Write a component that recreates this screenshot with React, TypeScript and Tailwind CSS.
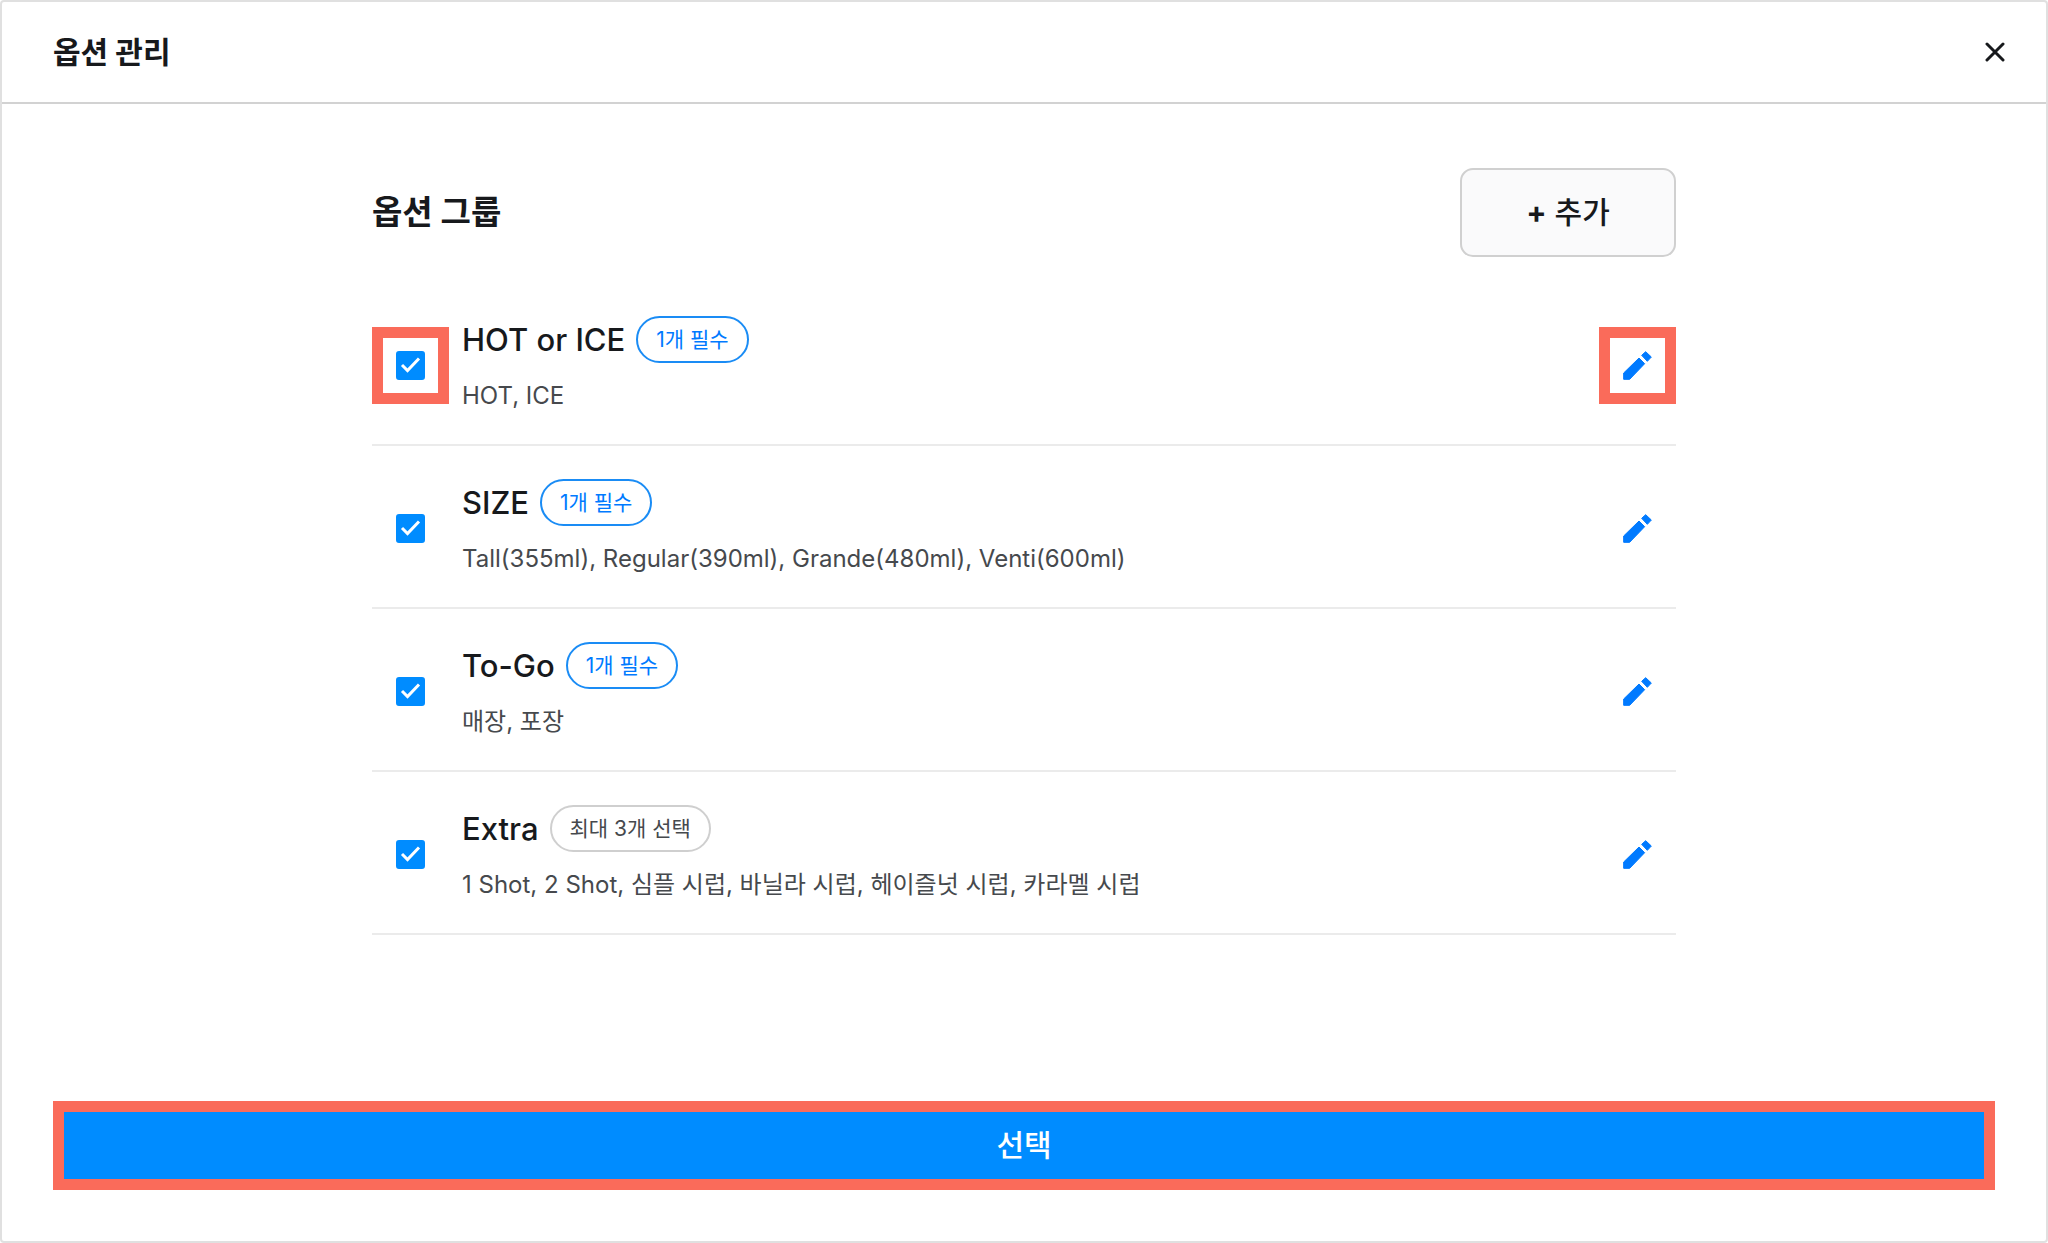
import { useState } from 'react'
import clsx from 'clsx'

type OptionGroup = {
  id: string
  name: string
  rule: string
  required: boolean
  items: string
  highlighted?: boolean
}

const groups: OptionGroup[] = [
  { id: 'temp', name: 'HOT or ICE', rule: '1개 필수', required: true, items: 'HOT, ICE', highlighted: true },
  {
    id: 'size',
    name: 'SIZE',
    rule: '1개 필수',
    required: true,
    items: 'Tall(355ml), Regular(390ml), Grande(480ml), Venti(600ml)',
  },
  { id: 'togo', name: 'To-Go', rule: '1개 필수', required: true, items: '매장, 포장' },
  {
    id: 'extra',
    name: 'Extra',
    rule: '최대 3개 선택',
    required: false,
    items: '1 Shot, 2 Shot, 심플 시럽, 바닐라 시럽, 헤이즐넛 시럽, 카라멜 시럽',
  },
]

function CloseIcon() {
  return (
    <svg viewBox="0 0 20 20" className="size-5" fill="none" stroke="currentColor" strokeWidth="3" strokeLinecap="round">
      <path d="M2 2l16 16M18 2L2 18" />
    </svg>
  )
}

function PencilIcon() {
  return (
    <svg viewBox="0 0 87 87" className="size-[29px]" fill="currentColor" stroke="currentColor" strokeWidth="3" strokeLinejoin="round">
      <path d="M68 2L85 18L73 31L56 13Z" />
      <path d="M48 21L65 38L20 85H2V66Z" />
    </svg>
  )
}

function OptionRow({ group }: { group: OptionGroup }) {
  const [checked, setChecked] = useState(true)
  const frame = group.highlighted ? 'border-[#fa6b5a]' : 'border-transparent'

  return (
    <li className="flex items-center gap-[13px] border-b-2 border-[#ebebeb] pt-[33px] pb-[30px]">
      <div className={clsx('grid size-[77px] shrink-0 place-items-center border-[11px]', frame)}>
        <input
          id={group.id}
          type="checkbox"
          checked={checked}
          onChange={(event) => setChecked(event.target.checked)}
          className="peer col-start-1 row-start-1 size-[29px] appearance-none rounded-[3px] border-2 border-[#c8c8c8] checked:border-[#008cff] checked:bg-[#008cff]"
        />
        <svg
          viewBox="0 0 29 29"
          className="pointer-events-none invisible col-start-1 row-start-1 size-[29px] peer-checked:visible"
          fill="none"
          stroke="white"
          strokeWidth="3"
        >
          <path d="M6 14l5.500 5.500L23 7.500" />
        </svg>
      </div>
      <div className="min-w-0 flex-1">
        <div className="flex items-center gap-[11px]">
          <label htmlFor={group.id} className="text-[31px] leading-[47px] font-medium">
            {group.name}
          </label>
          <span
            className={clsx(
              'rounded-full border-2 px-[18px] text-[21px] leading-[43px]',
              group.required ? 'border-[#1a8cf5] text-[#007aff]' : 'border-[#cfcfcf] text-[#46494d]',
            )}
          >
            {group.rule}
          </span>
        </div>
        <p className="mt-[15px] text-[24px] leading-[36px] text-[#46494d]">{group.items}</p>
      </div>
      <button
        type="button"
        aria-label={`${group.name} 수정`}
        className={clsx('grid size-[77px] shrink-0 place-items-center border-[11px] text-[#007aff]', frame)}
      >
        <PencilIcon />
      </button>
    </li>
  )
}

export default function App() {
  return (
    <div className="flex min-h-screen flex-col rounded-[4px] border-2 border-[#e0e0e0] bg-white font-['Inter','Noto_Sans_CJK_KR',sans-serif] text-[#17191c]">
      <header className="flex h-[102px] items-center justify-between border-b-2 border-[#d2d2d2] pr-[41px] pl-[51px]">
        <h1 className="text-[30px] font-bold">옵션 관리</h1>
        <button type="button" aria-label="닫기">
          <CloseIcon />
        </button>
      </header>

      <main className="mx-auto w-full max-w-[1304px] flex-1 pt-16">
        <div className="flex items-center justify-between">
          <h2 className="text-[33px] font-bold">옵션 그룹</h2>
          <button
            type="button"
            className="h-[89px] w-[216px] rounded-[13px] border-2 border-[#d0d0d0] bg-[#fafafb] text-[30px] font-medium"
          >
            <span className="font-bold">+</span> 추가
          </button>
        </div>
        <ul className="mt-[26px]">
          {groups.map((group) => (
            <OptionRow key={group.id} group={group} />
          ))}
        </ul>
      </main>

      <footer className="px-[51px] pb-[51px]">
        <button
          type="button"
          className="h-[89px] w-full border-[11px] border-[#fa6b5a] bg-[#008cff] text-[30px] font-medium text-white"
        >
          선택
        </button>
      </footer>
    </div>
  )
}
